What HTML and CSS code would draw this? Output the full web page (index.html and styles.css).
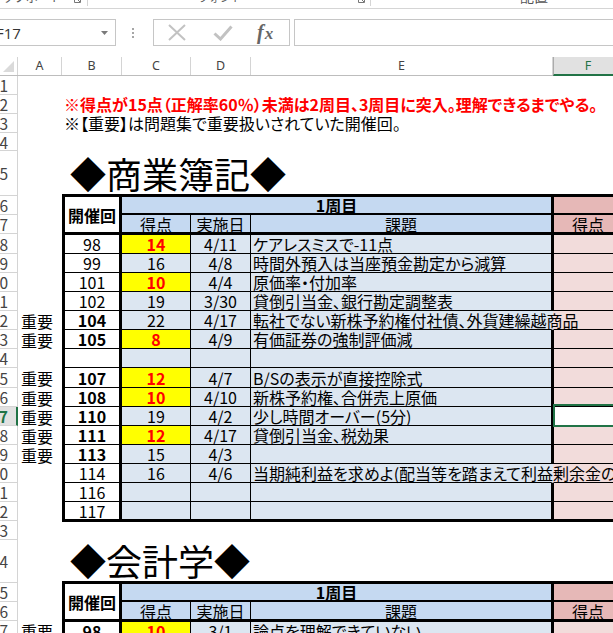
FILE: index.html
```html
<!DOCTYPE html>
<html lang="ja">
<head>
<meta charset="utf-8">
<title>簿記 得点表</title>
<link rel="stylesheet" href="styles.css">
</head>
<body>
<div class="ribbon">
  <div class="grp g1"><span class="glabel l1">クリップボード</span><svg class="launch" width="7" height="7" viewBox="0 0 7 7"><path d="M0.5 0V6.5H6.5V0M2 2L6 6" fill="none" stroke="#777" stroke-width="1"/></svg></div>
  <div class="grp g2"><span class="glabel l2">フォント</span><svg class="launch" width="7" height="7" viewBox="0 0 7 7"><path d="M0.5 0V6.5H6.5V0M2 2L6 6" fill="none" stroke="#777" stroke-width="1"/></svg></div>
  <div class="grp g3"><span class="glabel l3">配置</span></div>
</div>
<div class="fbar">
  <div class="namebox"><span class="nbtext">F17</span><svg class="caret" width="7" height="4" viewBox="0 0 7 4"><path d="M0 0H7L3.5 4Z" fill="#7a7a7a"/></svg></div>
  <div class="dots"><i></i><i></i><i></i></div>
  <div class="fbtns">
    <svg class="xicon" width="18" height="17" viewBox="0 0 18 17"><path d="M1 1L17 16M17 1L1 16" stroke="#c2c2c2" stroke-width="2"/></svg>
    <svg class="vicon" width="20" height="16" viewBox="0 0 20 16"><path d="M1.5 8.5L7.5 14L18.5 1.5" fill="none" stroke="#c2c2c2" stroke-width="3"/></svg>
    <span class="fx"><i>f</i><i class="fxx">x</i></span>
  </div>
  <div class="finput"></div>
</div>
<div class="colhdr">
  <div class="corner"><svg width="11" height="11" viewBox="0 0 11 11"><path d="M11 0V11H0Z" fill="#dadada"/></svg></div>
  <div class="ch wa">A</div>
  <div class="ch wb">B</div>
  <div class="ch wc">C</div>
  <div class="ch wd">D</div>
  <div class="ch we">E</div>
  <div class="ch wf sel">F</div>
</div>
<div class="sheet">
  <!-- 1 -->
  <div class="rh">1</div><div class="blank6"></div>
  <!-- 2 -->
  <div class="rh">2</div><div class="ca"></div><div class="note red">※得点が15点（正解率60％）未満は2周目、3周目に突入。理解できるまでやる。</div>
  <!-- 3 -->
  <div class="rh">3</div><div class="ca"></div><div class="note">※【重要】は問題集で重要扱いされていた開催回。</div>
  <!-- 4 -->
  <div class="rh">4</div><div class="blank6"></div>
  <!-- 5 -->
  <div class="rh">5</div><div class="ca"></div><div class="title">◆商業簿記◆</div>
  <!-- 6 -->
  <div class="rh">6</div><div class="ca"></div>
  <div class="cell cb head2 bt1 bold">開催回</div>
  <div class="cell round bt1 bold">1周目</div>
  <div class="cell cf hdrp bt1 bb2"></div>
  <!-- 7 -->
  <div class="rh">7</div><div class="ca"></div>
  <div class="cell cc hdr bb2">得点</div>
  <div class="cell cd hdr bb2">実施日</div>
  <div class="cell ce hdr bb2 center">課題</div>
  <div class="cell cf hdrp bb2">得点</div>
  <!-- 8 -->
  <div class="rh">8</div><div class="ca"></div>
  <div class="cell cb bt1">98</div><div class="cell cc hi bt1">14</div><div class="cell cd bt1">4/11</div><div class="cell ce bt1">ケアレスミスで-11点</div><div class="cell cf bt1"></div>
  <!-- 9 -->
  <div class="rh">9</div><div class="ca"></div>
  <div class="cell cb">99</div><div class="cell cc">16</div><div class="cell cd">4/8</div><div class="cell ce">時間外預入は当座預金勘定から減算</div><div class="cell cf"></div>
  <!-- 10 -->
  <div class="rh">10</div><div class="ca"></div>
  <div class="cell cb">101</div><div class="cell cc hi">10</div><div class="cell cd">4/4</div><div class="cell ce">原価率・付加率</div><div class="cell cf"></div>
  <!-- 11 -->
  <div class="rh">11</div><div class="ca"></div>
  <div class="cell cb">102</div><div class="cell cc">19</div><div class="cell cd">3/30</div><div class="cell ce">貸倒引当金、銀行勘定調整表</div><div class="cell cf"></div>
  <!-- 12 -->
  <div class="rh">12</div><div class="ca">重要</div>
  <div class="cell cb bold">104</div><div class="cell cc">22</div><div class="cell cd">4/17</div><div class="cell ce ov">転社でない新株予約権付社債、外貨建繰越商品</div><div class="cell cf ovn"></div>
  <!-- 13 -->
  <div class="rh">13</div><div class="ca">重要</div>
  <div class="cell cb bold">105</div><div class="cell cc hi">8</div><div class="cell cd">4/9</div><div class="cell ce">有価証券の強制評価減</div><div class="cell cf"></div>
  <!-- 14 -->
  <div class="rh">14</div><div class="ca"></div>
  <div class="cell cb"></div><div class="cell cc"></div><div class="cell cd"></div><div class="cell ce"></div><div class="cell cf"></div>
  <!-- 15 -->
  <div class="rh">15</div><div class="ca">重要</div>
  <div class="cell cb bold">107</div><div class="cell cc hi">12</div><div class="cell cd">4/7</div><div class="cell ce">B/Sの表示が直接控除式</div><div class="cell cf"></div>
  <!-- 16 -->
  <div class="rh">16</div><div class="ca">重要</div>
  <div class="cell cb bold">108</div><div class="cell cc hi">10</div><div class="cell cd">4/10</div><div class="cell ce">新株予約権、合併売上原価</div><div class="cell cf"></div>
  <!-- 17 -->
  <div class="rh sel">17</div><div class="ca">重要</div>
  <div class="cell cb bold">110</div><div class="cell cc">19</div><div class="cell cd">4/2</div><div class="cell ce">少し時間オーバー(5分)</div><div class="cell cf active"></div>
  <!-- 18 -->
  <div class="rh">18</div><div class="ca">重要</div>
  <div class="cell cb bold">111</div><div class="cell cc hi">12</div><div class="cell cd">4/17</div><div class="cell ce">貸倒引当金、税効果</div><div class="cell cf"></div>
  <!-- 19 -->
  <div class="rh">19</div><div class="ca">重要</div>
  <div class="cell cb bold">113</div><div class="cell cc">15</div><div class="cell cd">4/3</div><div class="cell ce"></div><div class="cell cf"></div>
  <!-- 20 -->
  <div class="rh">20</div><div class="ca"></div>
  <div class="cell cb">114</div><div class="cell cc">16</div><div class="cell cd">4/6</div><div class="cell ce ov">当期純利益を求めよ(配当等を踏まえて利益剰余金の</div><div class="cell cf ovn"></div>
  <!-- 21 -->
  <div class="rh">21</div><div class="ca"></div>
  <div class="cell cb">116</div><div class="cell cc"></div><div class="cell cd"></div><div class="cell ce"></div><div class="cell cf"></div>
  <!-- 22 -->
  <div class="rh">22</div><div class="ca"></div>
  <div class="cell cb bb2">117</div><div class="cell cc bb2"></div><div class="cell cd bb2"></div><div class="cell ce bb2"></div><div class="cell cf bb2"></div>
  <!-- 23 -->
  <div class="rh">23</div><div class="ca"></div><div class="tbot"></div>
  <!-- 24 -->
  <div class="rh">24</div><div class="ca"></div><div class="title">◆会計学◆</div>
  <!-- 25 -->
  <div class="rh">25</div><div class="ca"></div>
  <div class="cell cb head2 bt1 bold">開催回</div>
  <div class="cell round bt1 bold">1周目</div>
  <div class="cell cf hdrp bt1 bb2"></div>
  <!-- 26 -->
  <div class="rh">26</div><div class="ca"></div>
  <div class="cell cc hdr bb2">得点</div>
  <div class="cell cd hdr bb2">実施日</div>
  <div class="cell ce hdr bb2 center">課題</div>
  <div class="cell cf hdrp bb2">得点</div>
  <!-- 27 -->
  <div class="rh">27</div><div class="ca">重要</div>
  <div class="cell cb bold bt1">98</div><div class="cell cc hi bt1">10</div><div class="cell cd bt1">3/1</div><div class="cell ce bt1">論点を理解できていない</div><div class="cell cf bt1"></div>
</div>
</body>
</html>
```

FILE: styles.css
```css
* { box-sizing: border-box; }
html, body { margin: 0; padding: 0; }
body {
  width: 613px;
  height: 633px;
  overflow: hidden;
  background: #fff;
  font-family: "Noto Sans CJK JP", "Noto Sans", sans-serif;
  color: #000;
}

/* ribbon remnant */
.ribbon {
  height: 9px;
  border-bottom: 1px solid #d5d5d5;
  display: flex;
  overflow: hidden;
}
.grp {
  height: 6px;
  display: flex;
  align-items: flex-start;
  overflow: hidden;
  border-right: 1px solid #d5d5d5;
}
.g1 { width: 88px; }
.g2 { width: 283px; }
.g3 { flex: 1; border-right: 0; }
.glabel {
  font-size: 12px;
  line-height: 12px;
  margin-top: -9px;
  color: #555;
  white-space: nowrap;
}
.l1 { margin-left: -22px; }
.l2 { margin-left: 110px; font-size: 11px; }
.l3 { margin-left: 149px; font-size: 14px; line-height: 14px; margin-top: -11px; }
.launch { margin-top: -4px; flex: none; }
.g1 .launch { margin-left: 12px; }
.g2 .launch { margin-left: 116px; }

/* formula bar */
.fbar {
  height: 48px;
  padding-top: 10px;
  display: flex;
  align-items: flex-start;
}
.namebox {
  flex: none;
  margin-left: -10px;
  width: 126px;
  height: 27px;
  border: 1px solid #c6c6c6;
  display: flex;
  align-items: center;
  justify-content: space-between;
  padding: 0 7px 0 5px;
  font-family: "Open Sans", "Noto Sans", sans-serif;
  font-size: 15px;
  line-height: 20px;
  color: #333;
}
.caret { margin-top: 1px; }
.dots {
  flex: none;
  margin-left: 16px;
  width: 3px;
  height: 27px;
  display: flex;
  flex-direction: column;
  justify-content: center;
  gap: 2px;
}
.dots i {
  display: block;
  width: 2px;
  height: 2px;
  background: #a6a6a6;
}
.fbtns {
  flex: none;
  margin-left: 18px;
  width: 137px;
  height: 27px;
  border: 1px solid #c6c6c6;
  display: flex;
  align-items: center;
  padding-left: 14px;
}
.vicon { margin-left: 27px; }
.fx {
  margin-left: 24px;
  font-family: "Liberation Serif", serif;
  font-size: 20px;
  line-height: 20px;
  color: #666;
  font-weight: bold;
}
.fx i { font-style: italic; }
.fxx { font-size: 17px; margin-left: 1px; }
.finput {
  flex: 1;
  margin-left: 4px;
  height: 27px;
  border: 1px solid #c6c6c6;
  border-right: 0;
}

/* column headers */
.colhdr {
  height: 19px;
  display: flex;
  align-items: flex-start;
  border-bottom: 1px solid #bdbdbd;
  font-family: "Noto Sans", sans-serif;
  font-size: 12.5px;
  color: #444;
}
.corner {
  flex: none;
  width: 18px;
  height: 18px;
  border-right: 1px solid #d4d4d4;
  display: flex;
  align-items: flex-end;
  justify-content: flex-end;
  padding: 0 3px 3px 0;
}
.ch {
  flex: none;
  height: 18px;
  line-height: 18px;
  text-align: center;
  border-right: 1px solid #d4d4d4;
}
.wa { width: 44px; }
.wb { width: 60px; }
.wc { width: 69px; }
.wd { width: 60px; }
.we { width: 302px; }
.wf { width: 70px; }
.ch.sel {
  height: 19px;
  background: #e1e1e1;
  color: #217346;
  border-left: 1px solid #ababab;
  border-bottom: 2px solid #217346;
}

/* sheet */
.sheet {
  display: grid;
  grid-template-columns: 18px 44px 60px 69px 60px 302px 70px;
  grid-template-rows: 19px 19px 19px 18px 45px 19px 19px 20px repeat(6, 19px) 20px repeat(7, 19px) 19px 43px 19px 19px 19px;
  font-feature-settings: "palt" 1;
}
.rh {
  border-right: 1px solid #d4d4d4;
  border-bottom: 1px solid #d4d4d4;
  display: flex;
  align-items: center;
  justify-content: flex-end;
  padding-right: 9px;
  overflow: hidden;
  font-size: 15.5px;
  line-height: 16px;
  color: #444;
  white-space: nowrap;
}
.rh.sel {
  background: #e1e1e1;
  color: #217346;
  border-right: 2px solid #217346;
  padding-right: 8px;
  font-weight: bold;
}
.blank6 { grid-column: span 6; }
.ca {
  display: flex;
  align-items: center;
  padding-left: 3px;
  font-size: 16px;
  line-height: 16px;
  white-space: nowrap;
}
.note {
  grid-column: span 5;
  display: flex;
  align-items: center;
  padding-left: 2px;
  font-size: 16px;
  line-height: 17px;
  white-space: nowrap;
}
.red { color: #f00; font-weight: bold; }
.title {
  grid-column: span 5;
  border-bottom: 2px solid #000;
  display: flex;
  align-items: flex-end;
  padding: 0 0 3px 8px;
  font-size: 36px;
  line-height: 36px;
  white-space: nowrap;
  font-feature-settings: normal;
}
.tbot {
  grid-column: span 5;
  border-top: 1px solid #000;
}

.cell {
  display: flex;
  align-items: center;
  justify-content: center;
  overflow: hidden;
  white-space: nowrap;
  font-size: 16px;
  line-height: 16px;
  border-right: 1px solid #000;
  border-bottom: 1px solid #000;
}
.cb {
  background: #fff;
  border-left: 3px solid #000;
  border-right: 3px solid #000;
}
.cc, .cd { background: #dce6f1; }
.ce {
  background: #dce6f1;
  border-right: 2px solid #000;
  justify-content: flex-start;
  padding-left: 2px;
}
.cf {
  background: #f2dcdb;
  border-left: 1px solid #000;
}
.head2 {
  grid-row: span 2;
  border-bottom: 2px solid #000;
}
.round {
  grid-column: span 3;
  background: #c5d9f1;
  border-right: 2px solid #000;
  border-bottom: 2px solid #000;
}
.hdr { background: #c5d9f1; }
.hdrp { background: #e6b8b7; }
.center { justify-content: center; padding-left: 0; }
.bt1 { border-top: 1px solid #000; }
.bb2 { border-bottom-width: 2px; }
.bold { font-weight: bold; }
.hi {
  background: #ffff00;
  color: #f00;
  font-weight: bold;
}
.ov {
  overflow: visible;
  position: relative;
  z-index: 1;
  border-right-color: transparent;
}
.ovn { border-left-color: transparent; }
.active {
  position: relative;
  overflow: visible;
  background: #fff;
}
.active::after {
  content: "";
  position: absolute;
  left: -1px;
  top: -3px;
  right: -4px;
  bottom: -2px;
  border: 2px solid #217346;
}
```
